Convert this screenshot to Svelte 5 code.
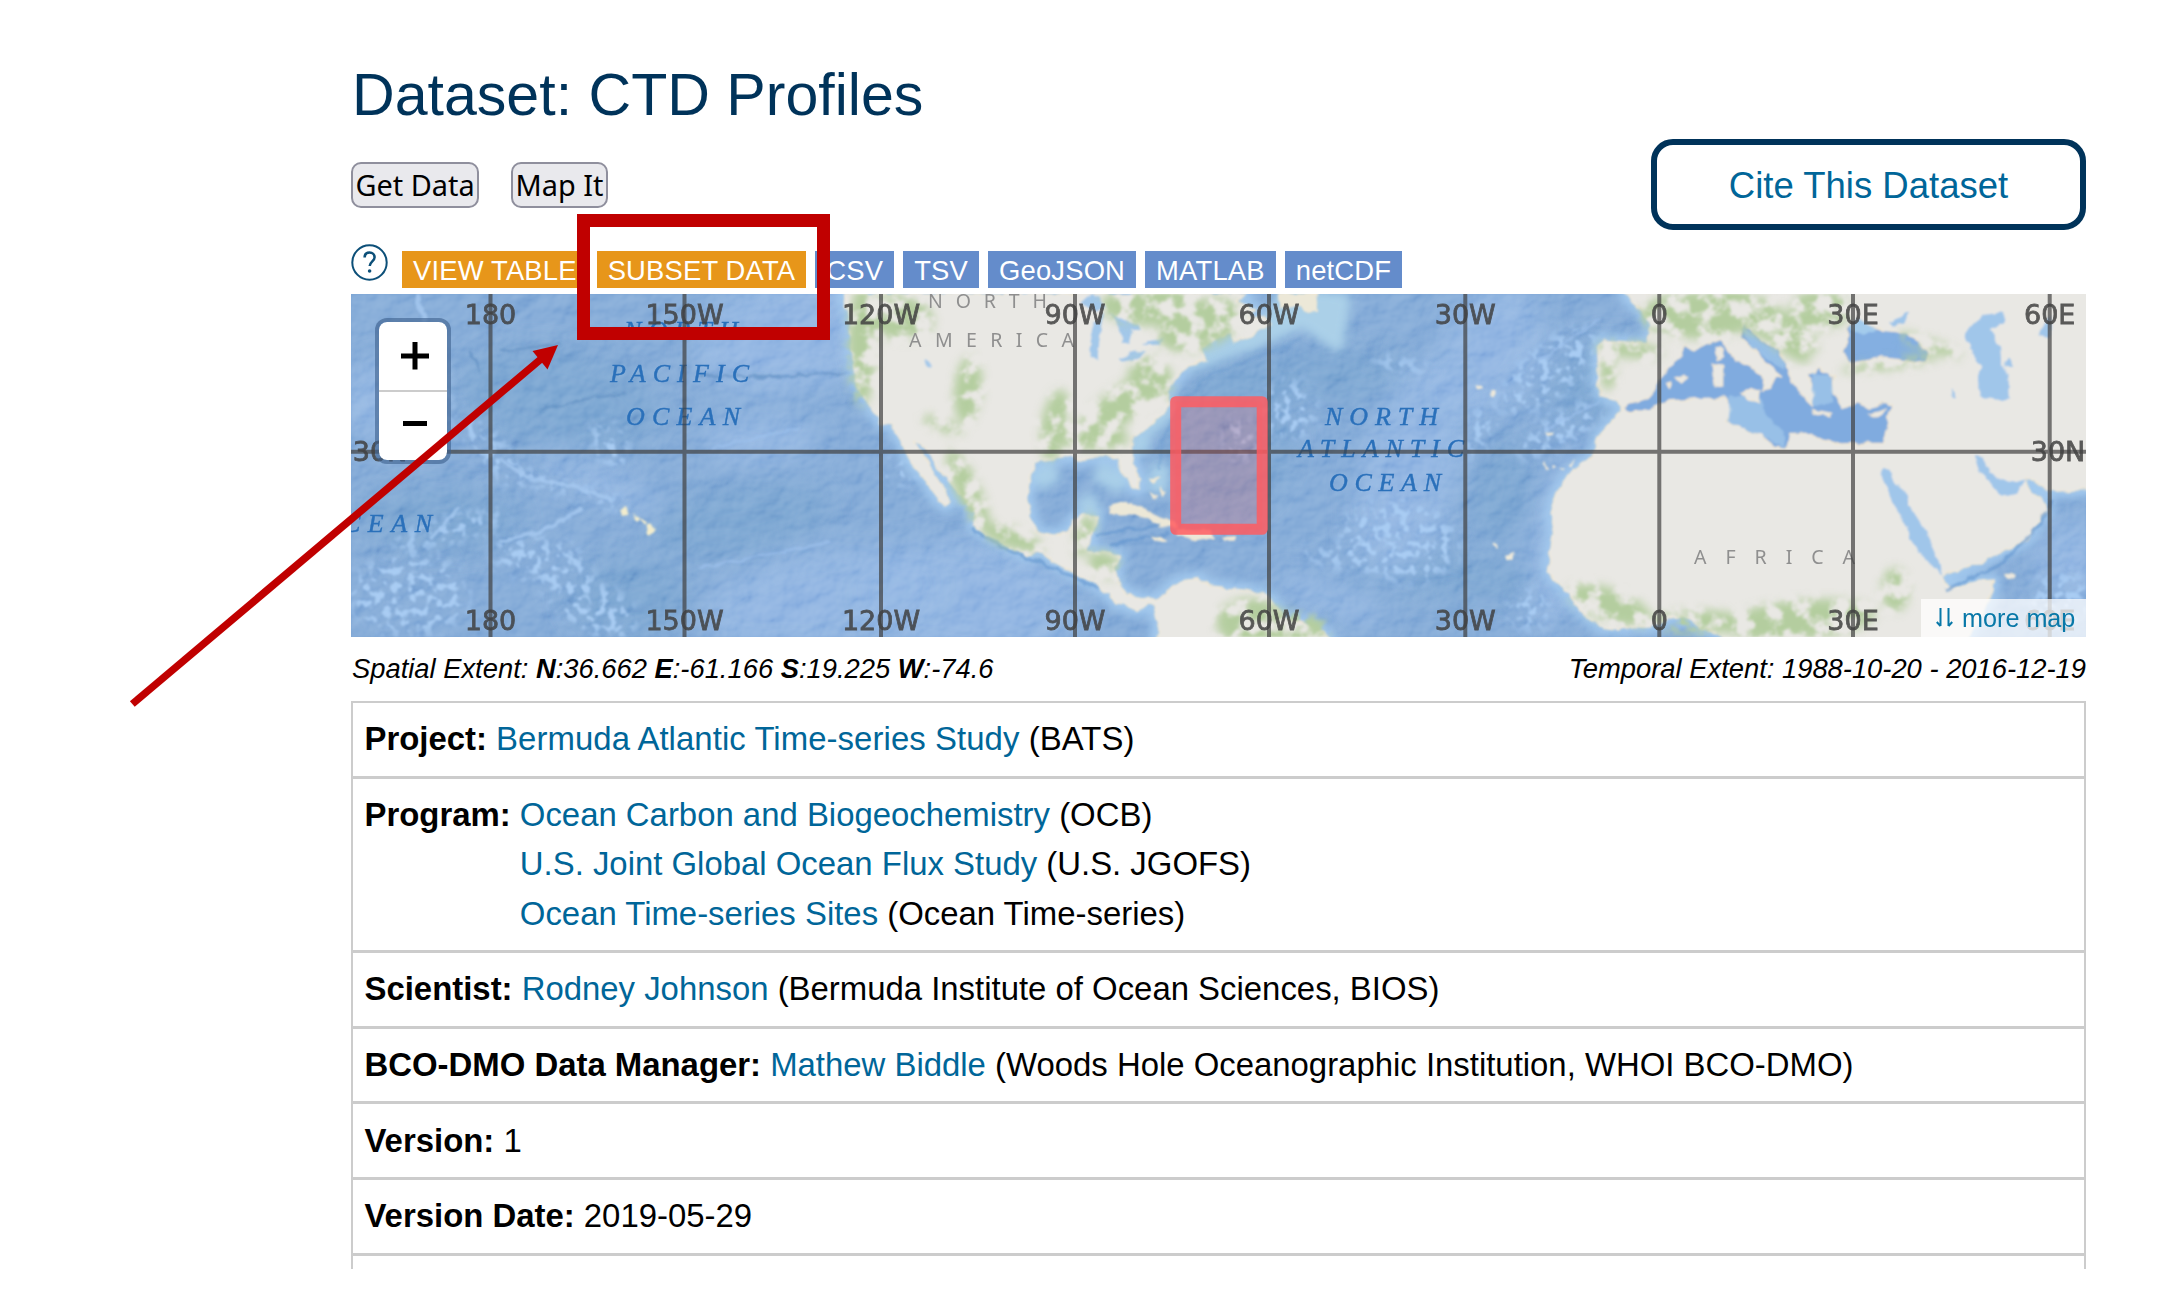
<script>
  const tabs = [
    { label: 'VIEW TABLE', kind: 'view' },
    { label: 'SUBSET DATA', kind: 'view' },
    { label: 'CSV', kind: 'file' },
    { label: 'TSV', kind: 'file' },
    { label: 'GeoJSON', kind: 'file' },
    { label: 'MATLAB', kind: 'file' },
    { label: 'netCDF', kind: 'file' }
  ];

  const rows = [
    { name: 'Project:', items: [{ link: 'Bermuda Atlantic Time-series Study', text: '(BATS)' }], loose: true },
    {
      name: 'Program:',
      items: [
        { link: 'Ocean Carbon and Biogeochemistry', text: '(OCB)' },
        { link: 'U.S. Joint Global Ocean Flux Study', text: '(U.S. JGOFS)' },
        { link: 'Ocean Time-series Sites', text: '(Ocean Time-series)' }
      ]
    },
    { name: 'Scientist:', items: [{ link: 'Rodney Johnson', text: '(Bermuda Institute of Ocean Sciences, BIOS)' }] },
    {
      name: 'BCO-DMO Data Manager:',
      items: [{ link: 'Mathew Biddle', text: '(Woods Hole Oceanographic Institution, WHOI BCO-DMO)' }]
    },
    { name: 'Version:', items: [{ text: '1' }] },
    { name: 'Version Date:', items: [{ text: '2019-05-29' }] }
  ];

  const meridians = [
    [490.5, '180'], [684.5, '150W'], [881, '120W'], [1075, '90W'], [1269, '60W'],
    [1465.3, '30W'], [1659.3, '0'], [1853, '30E'], [2049.7, '60E']
  ];

  const americas =
    'M-20,190 L-8,240 2,300 4,350 10,420 25,470 60,530 95,580 130,588 150,630 165,665 190,710 230,755 255,800 290,828 300,815 285,775 255,735 230,690 205,655 195,638 215,645 240,680 270,720 310,770 345,810 375,850 367,885 410,915 470,945 530,975 575,968 620,1000 680,1035 730,1060 765,1085 800,1120 840,1130 865,1145 890,1120 912,1130 925,1180 920,1240 1450,1240 1400,1190 1350,1175 1300,1162 1265,1110 1235,1090 1180,1080 1130,1075 1080,1070 1045,1045 1000,1052 965,1065 945,1092 915,1110 870,1105 830,1095 805,1060 795,1020 810,975 760,968 710,965 725,920 745,858 700,855 670,870 655,905 600,918 560,905 540,860 530,810 540,740 560,700 600,685 650,680 690,690 740,680 800,680 820,735 850,775 868,780 870,750 850,700 845,655 850,622 900,585 940,555 962,520 950,490 985,440 1010,410 1068,392 1052,350 1100,325 1140,310 1150,338 1190,325 1262,282 1240,262 1200,265 1215,240 1160,215 1190,190 Z';
  const oldWorld =
    'M-80,30 L-60,60 -20,100 2,130 -3,192 -140,180 -157,200 -155,260 -158,300 -146,350 -100,362 -82,385 -95,405 -120,430 -155,470 -165,520 -200,550 -250,590 -285,650 -300,700 -290,760 -300,820 -305,880 -265,920 -230,970 -190,1010 -140,1045 -100,1050 -50,1040 0,1045 60,1015 120,1015 150,1045 200,1060 230,1090 945,1090 1000,1000 1030,925 1030,900 980,905 900,925 875,890 980,850 1060,815 1130,780 1165,730 1195,685 1170,655 1130,625 1130,590 1200,635 1320,628 1320,30 Z';
  const mediterranean =
    'M-75,385 L-60,370 -10,355 20,320 40,285 55,262 95,230 105,200 140,210 180,190 215,178 230,210 260,240 310,265 345,300 340,330 358,325 375,290 395,288 350,250 310,210 278,178 272,145 285,133 310,160 350,190 400,230 405,260 430,310 460,350 487,375 495,340 475,280 510,265 550,290 545,330 580,385 620,368 660,385 700,370 725,375 700,490 640,490 570,492 520,480 470,460 420,460 410,508 370,500 330,465 290,450 230,425 245,390 230,354 150,355 60,363 0,385 -60,398 Z';
  const inlandSeas = [
    'M700,565 L690,577 730,665 765,740 810,820 878,890 860,830 820,745 785,690 770,650 720,580 Z',
    'M975,525 L1000,530 1020,580 1070,610 1130,595 1100,640 1050,648 1025,610 985,570 Z',
    'M1000,105 L1060,95 1060,130 1020,150 1050,200 1055,250 1075,290 1080,355 1040,362 985,345 985,290 1000,260 960,210 945,160 Z',
    'M1062,245 L1075,228 1090,260 1065,262 Z',
    'M715,130 L775,95 760,130 730,140 Z',
    'M1165,165 L1185,130 1205,110 1205,172 Z',
    'M908,325 L918,335 918,355 912,350 Z'
  ];
  const lakes =
    'M690,225 L725,195 750,205 770,235 740,240 Z M760,245 L735,280 722,330 722,385 742,385 750,320 755,280 Z M780,250 L830,275 870,285 875,300 850,300 838,345 815,335 808,290 Z M808,388 L850,365 890,362 870,378 820,395 Z M875,345 L910,328 945,325 930,345 Z M225,390 L245,400 245,412 230,405 Z';
  const islands =
    'M778,832 L830,820 880,835 930,860 975,880 985,893 930,890 900,868 850,848 785,850 Z M905,922 L935,920 945,930 915,934 Z M985,900 L1080,905 1095,920 1030,930 980,918 Z M1120,922 L1150,920 1150,930 1120,930 Z M1285,190 L1400,190 1405,245 1375,245 1350,225 1290,235 Z M900,745 l30,0 -20,14 Z M905,790 l15,10 -8,8 Z M930,770 l15,20 -8,8 Z';
  const medIslands =
    'M195,210 l20,-8 6,30 -16,10 Z M190,255 l28,0 0,60 -22,5 Z M268,337 L330,328 326,368 290,352 Z M488,390 L545,400 540,410 495,402 Z M660,405 L705,388 685,415 Z M75,295 l25,-12 12,8 -20,15 Z M50,310 l14,-4 -6,14 Z M1068,888 l20,-8 4,12 -18,4 Z';
  const atlanticIslets =
    'M670,318 l25,-5 10,8 -25,6 Z M720,335 l18,2 -5,12 -12,-2 Z M885,455 l25,0 0,8 -18,2 Z M880,545 l12,18 -8,0 Z M905,552 l14,8 -14,6 Z M925,568 l18,-3 -8,9 Z M955,560 l18,-22 -8,28 Z M725,788 l20,10 -5,8 -14,-8 Z M765,825 l24,-8 -4,22 -16,2 Z';

  // Vegetation, as [cx, cy, rx, ry, rotation].
  const forests = [
    [862, 345, 14, 60, 0], [900, 318, 34, 22, 10], [968, 390, 14, 34, 5], [943, 425, 22, 6, 20], [1055, 425, 14, 36, 10],
    [1115, 410, 50, 18, -40], [1150, 380, 22, 24, -30], [1150, 306, 50, 20, 0], [1200, 325, 44, 24, -20], [1095, 438, 34, 12, 0],
    [968, 490, 12, 44, -25], [1012, 538, 34, 10, 20], [1085, 535, 9, 22, 15], [1105, 565, 18, 12, 30],
    [1250, 622, 34, 24, 0], [1295, 630, 34, 18, 0], [1700, 315, 60, 24, 0], [1765, 320, 60, 18, 30], [1785, 345, 30, 8, 35],
    [1630, 350, 34, 8, 5], [1608, 370, 8, 20, 0], [1890, 364, 50, 5, -8], [1930, 345, 34, 6, 20], [1820, 310, 30, 20, 0],
    [1800, 620, 76, 20, -5], [1700, 622, 46, 12, 0], [1610, 605, 44, 16, 20], [1895, 590, 14, 22, 0]
  ];
  const swells = [
    [800, 330, 110, 60, -15], [820, 600, 120, 50, -10], [970, 600, 110, 60, 5], [600, 480, 70, 16, 25],
    [1410, 470, 50, 110, 15], [1490, 350, 50, 70, 30], [1560, 540, 26, 90, 10], [380, 400, 40, 40, 0],
    [1330, 600, 60, 16, 20], [2075, 560, 40, 40, 0], [760, 440, 60, 24, 0]
  ];
  const deeps = [
    [560, 400, 100, 50, 10], [740, 520, 90, 34, -10], [1330, 375, 80, 26, 0], [1500, 490, 30, 50, 10],
    [1600, 380, 50, 34, -30], [1450, 575, 100, 20, 5], [440, 520, 80, 30, 0], [630, 600, 60, 40, 0], [1230, 440, 60, 80, 10]
  ];
  // Clusters of seamounts on the sea floor.
  const seamounts = [
    [410, 595, 60, 40, 0], [450, 530, 60, 12, -15], [540, 560, 50, 22, 10], [590, 605, 50, 26, 30], [490, 450, 50, 14, 50],
    [430, 390, 18, 40, -10], [540, 480, 56, 7, 18], [600, 497, 30, 7, 20], [610, 445, 26, 16, 60], [1400, 540, 60, 40, 10],
    [1550, 370, 60, 26, -40], [1560, 430, 50, 16, -30], [1290, 410, 26, 30, 0], [1400, 365, 30, 8, 10], [1240, 440, 16, 20, 0],
    [1530, 610, 20, 20, -40], [1480, 430, 12, 30, 20], [2060, 600, 30, 30, -40], [1350, 560, 50, 10, 10], [900, 470, 20, 14, 0]
  ];
</script>

<main>
  <h1>Dataset: CTD Profiles</h1>

  <div class="actions">
    <div class="buttons">
      <button class="get">Get Data</button>
      <button class="mapit">Map It</button>
    </div>
    <a class="cite" href="#cite">Cite This Dataset</a>
  </div>

  <nav class="tabs">
    <svg class="help" viewBox="0 0 37 37">
      <circle cx="18.5" cy="18.5" r="17.2" fill="none" stroke="#0c4f78" stroke-width="2" />
      <path d="M13.6 13.6c0-3.2 2.1-5 5-5s5 1.900 5 4.600c0 3.900-4.900 4.400-4.900 8.900" fill="none" stroke="#0c4f78" stroke-width="2.500" />
      <circle cx="18.600" cy="27" r="1.800" fill="#0c4f78" />
    </svg>
    {#each tabs as tab}
      <a class={tab.kind} href="#data">{tab.label}</a>
    {/each}
  </nav>

  <section class="map">
    <svg class="chart" viewBox="351 294 1735 343" preserveAspectRatio="none">
      <defs>
        <filter id="soft" x="-20%" y="-20%" width="140%" height="140%"><feGaussianBlur stdDeviation="13" /></filter>
        <filter id="shelf"><feGaussianBlur stdDeviation="5" /></filter>
        <filter id="rough" x="-5%" y="-5%" width="110%" height="110%">
          <feTurbulence type="fractalNoise" baseFrequency="0.09" numOctaves="2" seed="4" result="n" />
          <feDisplacementMap in="SourceGraphic" in2="n" scale="7" xChannelSelector="R" yChannelSelector="G" />
          <feGaussianBlur stdDeviation="0.800" />
        </filter>
        <filter id="patchy" filterUnits="userSpaceOnUse" x="351" y="294" width="1735" height="343">
          <feGaussianBlur in="SourceGraphic" stdDeviation="5" result="b" />
          <feTurbulence type="fractalNoise" baseFrequency="0.06" numOctaves="4" seed="11" result="n" />
          <feColorMatrix in="n" type="matrix" values="0 0 0 0 0  0 0 0 0 0  0 0 0 0 0  5 0 0 0 -1.850" result="m" />
          <feComposite in="b" in2="m" operator="in" />
          <feGaussianBlur stdDeviation="1.100" />
        </filter>
        <filter id="speckle" filterUnits="userSpaceOnUse" x="351" y="294" width="1735" height="343">
          <feGaussianBlur in="SourceGraphic" stdDeviation="7" result="b" />
          <feTurbulence type="fractalNoise" baseFrequency="0.12" numOctaves="2" seed="23" result="n" />
          <feColorMatrix in="n" type="matrix" values="0 0 0 0 0  0 0 0 0 0  0 0 0 0 0  8 0 0 0 -4.100" result="m" />
          <feComposite in="b" in2="m" operator="in" />
          <feGaussianBlur stdDeviation="1" />
        </filter>
        <filter id="relief" filterUnits="userSpaceOnUse" x="351" y="294" width="1735" height="343">
          <feTurbulence type="fractalNoise" baseFrequency="0.035 0.045" numOctaves="4" seed="8" />
          <feColorMatrix type="matrix" values="0 0 0 0 0  0 0 0 0 0  0 0 0 0 0  1 0 0 0 0" />
          <feDiffuseLighting surfaceScale="5" diffuseConstant="0.850" lighting-color="#ffffff">
            <feDistantLight azimuth="225" elevation="38" />
          </feDiffuseLighting>
          <feGaussianBlur stdDeviation="1" />
        </filter>
      </defs>

      <rect x="351" y="294" width="1735" height="343" fill="#7ba4d4" />
      <g filter="url(#soft)">
        {#each deeps as [x, y, rx, ry, a]}
          <ellipse cx={x} cy={y} {rx} {ry} transform="rotate({a} {x} {y})" fill="#719dcc" opacity="0.800" />
        {/each}
        {#each swells as [x, y, rx, ry, a]}
          <ellipse cx={x} cy={y} {rx} {ry} transform="rotate({a} {x} {y})" fill="#8bb0e0" opacity="0.850" />
        {/each}
      </g>
      <rect class="relief" x="351" y="294" width="1735" height="343" filter="url(#relief)" />
      <g filter="url(#speckle)" fill="#a9ccf3">
        {#each seamounts as [x, y, rx, ry, a]}
          <ellipse cx={x} cy={y} {rx} {ry} transform="rotate({a} {x} {y})" />
        {/each}
      </g>
      <g filter="url(#rough)" fill="none">
        <path d="M418,294 L424,322 M499,460 L530,478 575,486 612,500 M500,540 C530,538 560,525 582,508 M430,540 L460,506" stroke="#a6c9f0" stroke-width="4" opacity="0.800" />
        <path d="M700,568 L760,556 830,542 M710,448 L800,428 M1540,360 L1600,318 M1545,430 L1600,400" stroke="#9cc0ec" stroke-width="2.500" opacity="0.700" />
        <path d="M700,376 L775,377 850,372 M540,410 L580,400 625,393 M560,344 L500,350 M470,350 L480,370" stroke="#5f8fc2" stroke-width="2.200" opacity="0.700" />
      </g>

      <g filter="url(#shelf)" fill="none" stroke="#a3c9ee" stroke-linejoin="round">
        <g transform="translate(850 230) scale(0.33333)">
          <path d={americas} stroke-width="42" />
          <path d="M840,640 L900,640 M880,600 L960,540 M1010,400 L1200,330 M930,700 L925,790 M620,720 L560,760 M740,720 L820,770 M700,800 L730,850" stroke="#a9cfe8" stroke-width="58" />
          <path d="M1280,200 L1480,210 1460,340 1360,270 1180,350" stroke="#abd0e8" stroke-width="44" fill="#abd0e8" />
        </g>
        <g transform="translate(1650 280) scale(0.33333)">
          <path d={oldWorld} stroke-width="40" />
        </g>
      </g>

      <g filter="url(#rough)" fill="#e9e8e4">
        <g transform="translate(850 230) scale(0.33333)" stroke="#f0e6d2" stroke-width="4">
          <path d={americas} />
          <path d={islands} fill="#ece8d8" />
          <path d={lakes} fill="#a3c8ea" stroke="none" />
        </g>
        <g transform="translate(1650 280) scale(0.33333)" stroke="#f0e6d2" stroke-width="4">
          <path d={oldWorld} />
          <path d={mediterranean} fill="#80abdf" />
          <path d="M240,350 L330,330 345,400 400,450 405,505 330,465 232,425 Z M275,140 L400,235 400,270 300,200 Z M485,275 L545,290 550,370 490,375 Z" fill="#9dc5e9" stroke="none" opacity="0.800" />
          <path d="M600,170 L592,145 620,115 680,150 740,155 790,170 830,215 830,245 790,250 740,235 690,230 650,240 600,245 580,215 Z" fill="#84afe1" />
          <path d="M600,150 L620,112 675,150 640,165 Z" fill="#a3cbec" stroke="none" />
          {#each inlandSeas as sea}
            <path d={sea} fill="#a0c6ea" stroke="none" />
          {/each}
          <path d={medIslands} />
        </g>
        <g transform="translate(1250 280) scale(0.33333)"><path d={atlanticIslets} fill="#efe9da" /></g>
        <path d="M620,510 l9,-3 -1,7 -6,1 Z M632,514 l8,4 -3,4 Z M640,518 l8,4 -3,4 Z M645,527 q5,-4 11,2 q-3,7 -8,5 Z" fill="#f2eccd" />
      </g>

      <g fill="none" stroke="#5f93cd" stroke-width="3" opacity="0.600" filter="url(#rough)">
        <path d="M972,528 C1010,556 1045,560 1098,590" />
        <path d="M1160,470 C1158,440 1170,410 1210,375 L1300,340" opacity="0.500" />
        <path d="M1097,535 L1160,525 M1110,545 L1170,533" />
        <path d="M1945,590 L2000,565 2040,525 2052,500" />
      </g>

      <g filter="url(#patchy)" fill="#b4cd9f">
        {#each forests as [x, y, rx, ry, a]}
          <ellipse cx={x} cy={y} {rx} {ry} transform="rotate({a} {x} {y})" />
        {/each}
      </g>

      <g class="ocean-name">
        <text x="624" y="339" textLength="114">NORTH</text>
        <text x="610" y="382" textLength="139">PACIFIC</text>
        <text x="626" y="425" textLength="114">OCEAN</text>
        <text x="343" y="532" textLength="89">CEAN</text>
        <text x="1325" y="425" textLength="113">NORTH</text>
        <text x="1298" y="457" textLength="166">ATLANTIC</text>
        <text x="1329" y="491" textLength="112">OCEAN</text>
      </g>
      <g class="land-name">
        <text x="928" y="308" textLength="119">NORTH</text>
        <text x="909" y="347" textLength="165">AMERICA</text>
        <text x="1694" y="564" textLength="161">AFRICA</text>
      </g>

      <g class="grid-lines">
        {#each meridians as [x]}
          <line x1={x} x2={x} y1="294" y2="637" />
        {/each}
        <line x1="351" x2="2086" y1="451.700" y2="451.700" />
      </g>
      <g class="grid-labels">
        {#each meridians as [x, label]}
          <text {x} y="324">{label}</text>
          <text {x} y="629.500">{label}</text>
        {/each}
        <text x="380" y="461">30N</text>
        <text x="2058" y="461">30N</text>
      </g>

      <rect x="1175.700" y="401.700" width="86.500" height="127.600" fill="#ff5050" fill-opacity="0.200" stroke="#ff5c60" stroke-opacity="0.850" stroke-width="11" stroke-linejoin="round" />
    </svg>

    <div class="zoom">
      <span class="key"><svg viewBox="0 0 30 30"><path d="M1 15H29M15 1V28.500" /></svg></span>
      <span class="key"><svg viewBox="0 0 30 30"><path d="M3 12.500H27" /></svg></span>
    </div>

    <a class="more" href="#map">
      <svg viewBox="0 0 17 20"><path d="M4.500 0V18M12.500 0V18M0.800 14L4.500 18.200M16.200 14L12.500 18.200" /></svg>
      more map
    </a>
  </section>

  <div class="extent">
    <span>Spatial Extent: <b>N</b>:36.662 <b>E</b>:-61.166 <b>S</b>:19.225 <b>W</b>:-74.6</span>
    <span>Temporal Extent: 1988-10-20 - 2016-12-19</span>
  </div>

  <section class="facts">
    {#each rows as row}
      <div class="row">
        <b>{row.name}</b>
        <div class:loose={row.loose}>
          {#each row.items as item}
            <p>{#if item.link}<a href="#item">{item.link}</a>{' '}{/if}{item.text}</p>
          {/each}
        </div>
      </div>
    {/each}
    <div class="stub"></div>
  </section>
</main>

<div class="callout"></div>
<svg class="arrow" viewBox="0 0 600 720">
  <path d="M132.300 704L541 359" stroke="#c00000" stroke-width="7.500" />
  <path d="M558 345L532.500 351L547.500 369.500Z" fill="#c00000" />
</svg>

<style>
  :global(body) {
    background: #fff;
    overflow: hidden;
  }
  main {
    box-sizing: border-box;
    width: 2086px;
    height: 1295px;
    padding: 61px 0 0 351px;
    font-family: 'Liberation Sans', Arial, sans-serif;
    color: #000;
  }
  a {
    color: #006699;
    text-decoration: none;
  }
  h1 {
    margin: 0;
    padding-left: 1px;
    font-size: 59.1px;
    line-height: 68px;
    font-weight: 400;
    color: #00335a;
  }
  .actions {
    display: flex;
    justify-content: space-between;
    align-items: center;
    height: 91px;
    margin-top: 10px;
  }
  .buttons {
    display: flex;
    gap: 32px;
  }
  button {
    box-sizing: border-box;
    height: 46px;
    padding: 0;
    border: 2px solid #8f8f9d;
    border-radius: 10px;
    background: #e9e9ed;
    font: 28.900px/42px 'Noto Sans', sans-serif;
    color: #000;
    white-space: nowrap;
  }
  .get {
    width: 128px;
  }
  .mapit {
    width: 97px;
  }
  .cite {
    box-sizing: border-box;
    width: 435px;
    height: 91px;
    border: 6px solid #00335a;
    border-radius: 22px;
    font-size: 36.500px;
    line-height: 81px;
    text-align: center;
  }
  .tabs {
    display: flex;
    gap: 9px;
    height: 37px;
    margin-top: 21px;
  }
  .help {
    width: 37px;
    height: 37px;
    margin: -7px 5px 0 0;
  }
  .tabs a {
    padding: 0 11px;
    font-size: 27.400px;
    line-height: 40px;
    letter-spacing: 0.180px;
    color: #fff;
  }
  .view {
    background: #e7961a;
  }
  .file {
    background: #648ccb;
  }
  .map {
    position: relative;
    height: 343px;
    margin-top: 6px;
    overflow: hidden;
  }
  .chart {
    display: block;
    width: 1735px;
    height: 343px;
  }
  .relief {
    mix-blend-mode: soft-light;
    opacity: 0.5;
  }
  .ocean-name {
    font: italic 26px 'Liberation Serif', serif;
    fill: #2a70ba;
    stroke: #2a70ba;
    stroke-width: 0.4px;
  }
  .land-name {
    font: 19.500px 'Noto Sans', sans-serif;
    fill: #8f8f8f;
  }
  .grid-lines {
    stroke: #404040;
    stroke-width: 4px;
    opacity: 0.7;
  }
  .grid-labels {
    font: 27px 'DejaVu Sans', sans-serif;
    text-anchor: middle;
    fill: #404040;
    stroke: #404040;
    stroke-width: 0.8px;
    opacity: 0.85;
  }
  .zoom {
    position: absolute;
    left: 24px;
    top: 24px;
    border: 4px solid rgba(60, 95, 140, 0.6);
    border-radius: 12px;
    background: #fff;
    background-clip: padding-box;
  }
  .key {
    display: flex;
    align-items: center;
    justify-content: center;
    width: 68px;
    height: 68px;
  }
  .key:first-child {
    border-bottom: 2px solid #ccc;
  }
  .key svg {
    width: 30px;
    height: 30px;
    margin-left: 3px;
    fill: none;
    stroke: #000;
    stroke-width: 5px;
  }
  .more {
    position: absolute;
    right: 0;
    bottom: 0;
    box-sizing: border-box;
    display: flex;
    align-items: center;
    gap: 9px;
    width: 165px;
    height: 38px;
    padding-left: 15px;
    background: rgba(255, 255, 255, 0.75);
    font-size: 25.200px;
    line-height: 38px;
    color: #0878a8;
    white-space: nowrap;
  }
  .more svg {
    width: 17px;
    height: 20px;
    fill: none;
    stroke: #0878a8;
    stroke-width: 2px;
  }
  .extent {
    display: flex;
    justify-content: space-between;
    margin-top: 12px;
    padding-left: 1px;
    font-size: 27.350px;
    font-style: italic;
    line-height: 40px;
  }
  .facts {
    margin-top: 12px;
    border: solid #ccc;
    border-width: 2px 2px 0;
  }
  .row {
    display: flex;
    gap: 9.100px;
    padding: 11.400px 0 12px 11.500px;
    border-bottom: 3px solid #ccc;
    font-size: 32.900px;
    line-height: 49.300px;
    white-space: nowrap;
  }
  .loose {
    letter-spacing: 0.070px;
  }
  p {
    margin: 0;
  }
  .stub {
    height: 13px;
  }
  .callout {
    position: absolute;
    left: 577px;
    top: 214px;
    width: 227px;
    height: 100px;
    border: 13px solid #c00000;
  }
  .arrow {
    position: absolute;
    left: 0;
    top: 0;
    width: 600px;
    height: 720px;
    fill: none;
  }
</style>
